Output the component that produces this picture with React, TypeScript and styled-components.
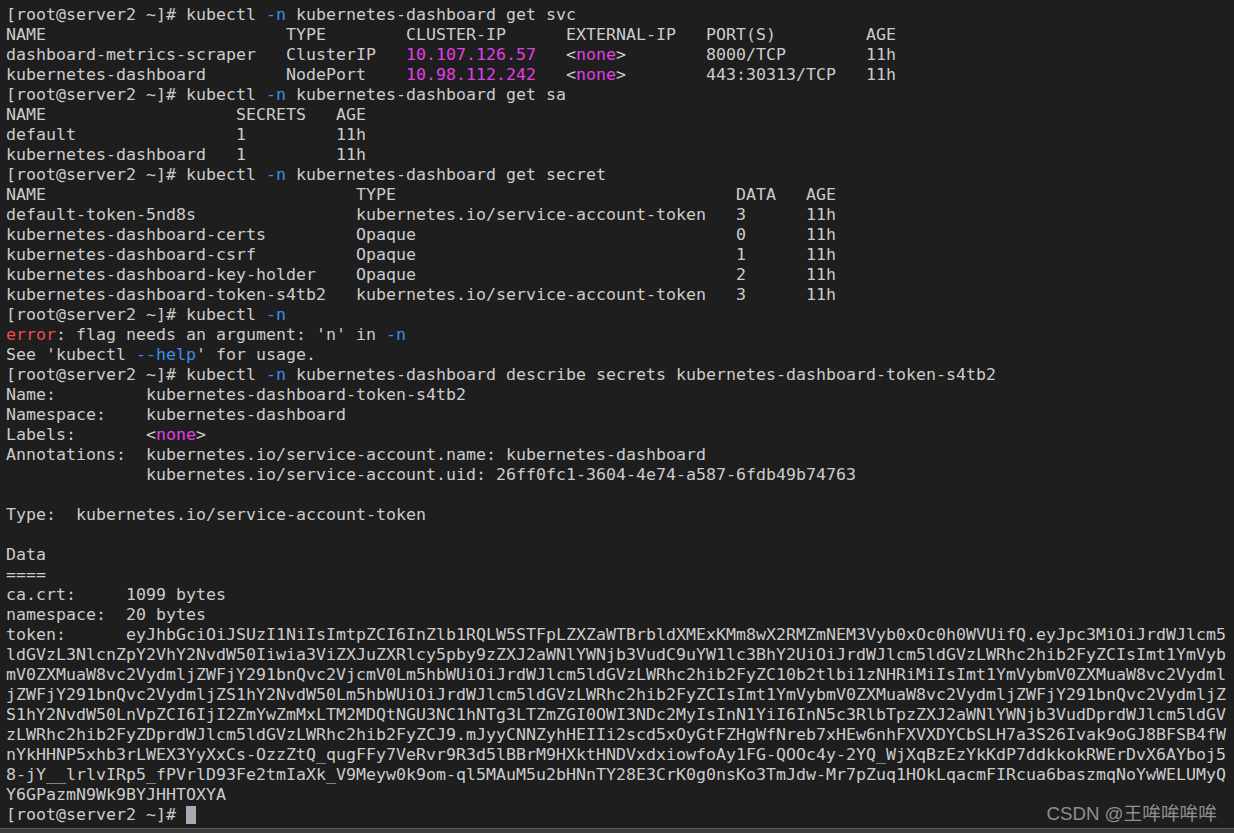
import React from "react";
import styled, { createGlobalStyle } from "styled-components";

const GlobalStyle = createGlobalStyle`
  html, body {
    margin: 0;
    padding: 0;
    background: #1e1e1e;
  }
`;

type Tone = "plain" | "magenta" | "blue" | "red";
type Seg = string | [Tone, string];

const toneColor: Record<Tone, string> = {
  plain: "#cccccc",
  magenta: "#e23ee6",
  blue: "#3b8eea",
  red: "#f14c4c",
};

const Window = styled.div`
  position: relative;
  width: 1234px;
  height: 833px;
  display: flex;
  flex-direction: column;
  background: #1e1e1e;
  overflow: hidden;
`;

const Screen = styled.div`
  flex: 1;
  padding: 5px 0 0 6px;
  overflow: hidden;
  font-family: "DejaVu Sans Mono", "Liberation Mono", monospace;
  font-size: 16.61px;
  line-height: 20px;
  color: #cccccc;
  white-space: pre;
`;

const Line = styled.div`
  height: 20px;
`;

const Span = styled.span<{ $tone: Tone }>`
  color: ${(p) => toneColor[p.$tone]};
`;

const Cursor = styled.span`
  display: inline-block;
  width: 10px;
  height: 18px;
  margin-top: 1px;
  vertical-align: top;
  background: #a9a9b6;
`;

const StatusEdge = styled.div`
  height: 4px;
  flex: none;
  background: #3a3a3a;
  border-top: 1px solid #5c5c5c;
`;

const Watermark = styled.div`
  position: absolute;
  right: 17px;
  bottom: 8px;
  font-family: "Liberation Sans", "Noto Sans CJK SC", sans-serif;
  font-size: 18.7px;
  color: #8f8f8f;
`;

const p = (s: string, n: number) => s.padEnd(n);
const none: Seg[] = ["<", ["magenta", "none"], ">"];
const prompt = "[root@server2 ~]# ";
const kube = (rest: string): Seg[] => [prompt + "kubectl ", ["blue", "-n"], rest];

const token = [
  "eyJhbGciOiJSUzI1NiIsImtpZCI6InZlb1RQLW5STFpLZXZaWTBrbldXMExKMm8wX2RMZmNEM3Vyb0xOc0h0WVUifQ.eyJpc3MiOiJrdWJlcm5",
  "ldGVzL3NlcnZpY2VhY2NvdW50Iiwia3ViZXJuZXRlcy5pby9zZXJ2aWNlYWNjb3VudC9uYW1lc3BhY2UiOiJrdWJlcm5ldGVzLWRhc2hib2FyZCIsImt1YmVyb",
  "mV0ZXMuaW8vc2VydmljZWFjY291bnQvc2VjcmV0Lm5hbWUiOiJrdWJlcm5ldGVzLWRhc2hib2FyZC10b2tlbi1zNHRiMiIsImt1YmVybmV0ZXMuaW8vc2Vydml",
  "jZWFjY291bnQvc2VydmljZS1hY2NvdW50Lm5hbWUiOiJrdWJlcm5ldGVzLWRhc2hib2FyZCIsImt1YmVybmV0ZXMuaW8vc2VydmljZWFjY291bnQvc2VydmljZ",
  "S1hY2NvdW50LnVpZCI6IjI2ZmYwZmMxLTM2MDQtNGU3NC1hNTg3LTZmZGI0OWI3NDc2MyIsInN1YiI6InN5c3RlbTpzZXJ2aWNlYWNjb3VudDprdWJlcm5ldGV",
  "zLWRhc2hib2FyZDprdWJlcm5ldGVzLWRhc2hib2FyZCJ9.mJyyCNNZyhHEIIi2scd5xOyGtFZHgWfNreb7xHEw6nhFXVXDYCbSLH7a3S26Ivak9oGJ8BFSB4fW",
  "nYkHHNP5xhb3rLWEX3YyXxCs-OzzZtQ_qugFFy7VeRvr9R3d5lBBrM9HXktHNDVxdxiowfoAy1FG-QOOc4y-2YQ_WjXqBzEzYkKdP7ddkkokRWErDvX6AYboj5",
  "8-jY__lrlvIRp5_fPVrlD93Fe2tmIaXk_V9Meyw0k9om-ql5MAuM5u2bHNnTY28E3CrK0g0nsKo3TmJdw-Mr7pZuq1HOkLqacmFIRcua6baszmqNoYwWELUMyQ",
  "Y6GPazmN9Wk9BYJHHTOXYA",
];

const secretRow = (name: string, type: string, data: string): Seg[] => [
  p(name, 35) + p(type, 38) + p(data, 7) + "11h",
];

const lines: Seg[][] = [
  kube(" kubernetes-dashboard get svc"),
  [p("NAME", 28) + p("TYPE", 12) + p("CLUSTER-IP", 16) + p("EXTERNAL-IP", 14) + p("PORT(S)", 16) + "AGE"],
  [p("dashboard-metrics-scraper", 28) + p("ClusterIP", 12), ["magenta", "10.107.126.57"], "   ", ...none, "        " + p("8000/TCP", 16) + "11h"],
  [p("kubernetes-dashboard", 28) + p("NodePort", 12), ["magenta", "10.98.112.242"], "   ", ...none, "        " + p("443:30313/TCP", 16) + "11h"],
  kube(" kubernetes-dashboard get sa"),
  [p("NAME", 23) + p("SECRETS", 10) + "AGE"],
  [p("default", 23) + p("1", 10) + "11h"],
  [p("kubernetes-dashboard", 23) + p("1", 10) + "11h"],
  kube(" kubernetes-dashboard get secret"),
  [p("NAME", 35) + p("TYPE", 38) + p("DATA", 7) + "AGE"],
  secretRow("default-token-5nd8s", "kubernetes.io/service-account-token", "3"),
  secretRow("kubernetes-dashboard-certs", "Opaque", "0"),
  secretRow("kubernetes-dashboard-csrf", "Opaque", "1"),
  secretRow("kubernetes-dashboard-key-holder", "Opaque", "2"),
  secretRow("kubernetes-dashboard-token-s4tb2", "kubernetes.io/service-account-token", "3"),
  kube(""),
  [["red", "error"], ": flag needs an argument: 'n' in ", ["blue", "-n"]],
  ["See 'kubectl ", ["blue", "--help"], "' for usage."],
  kube(" kubernetes-dashboard describe secrets kubernetes-dashboard-token-s4tb2"),
  [p("Name:", 14) + "kubernetes-dashboard-token-s4tb2"],
  [p("Namespace:", 14) + "kubernetes-dashboard"],
  [p("Labels:", 14), ...none],
  [p("Annotations:", 14) + "kubernetes.io/service-account.name: kubernetes-dashboard"],
  [p("", 14) + "kubernetes.io/service-account.uid: 26ff0fc1-3604-4e74-a587-6fdb49b74763"],
  [""],
  ["Type:  kubernetes.io/service-account-token"],
  [""],
  ["Data"],
  ["===="],
  [p("ca.crt:", 12) + "1099 bytes"],
  [p("namespace:", 12) + "20 bytes"],
  [p("token:", 12) + token[0]],
  ...token.slice(1).map((t) => [t] as Seg[]),
];

function TermLine({ segs }: { segs: Seg[] }) {
  return (
    <Line>
      {segs.map((s, i) =>
        typeof s === "string" ? (
          <Span key={i} $tone="plain">{s}</Span>
        ) : (
          <Span key={i} $tone={s[0]}>{s[1]}</Span>
        )
      )}
    </Line>
  );
}

export default function App() {
  return (
    <>
      <GlobalStyle />
      <Window>
        <Screen>
          {lines.map((segs, i) => (
            <TermLine key={i} segs={segs} />
          ))}
          <Line>
            {prompt}
            <Cursor />
          </Line>
        </Screen>
        <StatusEdge />
        <Watermark>CSDN @王哞哞哞哞</Watermark>
      </Window>
    </>
  );
}
